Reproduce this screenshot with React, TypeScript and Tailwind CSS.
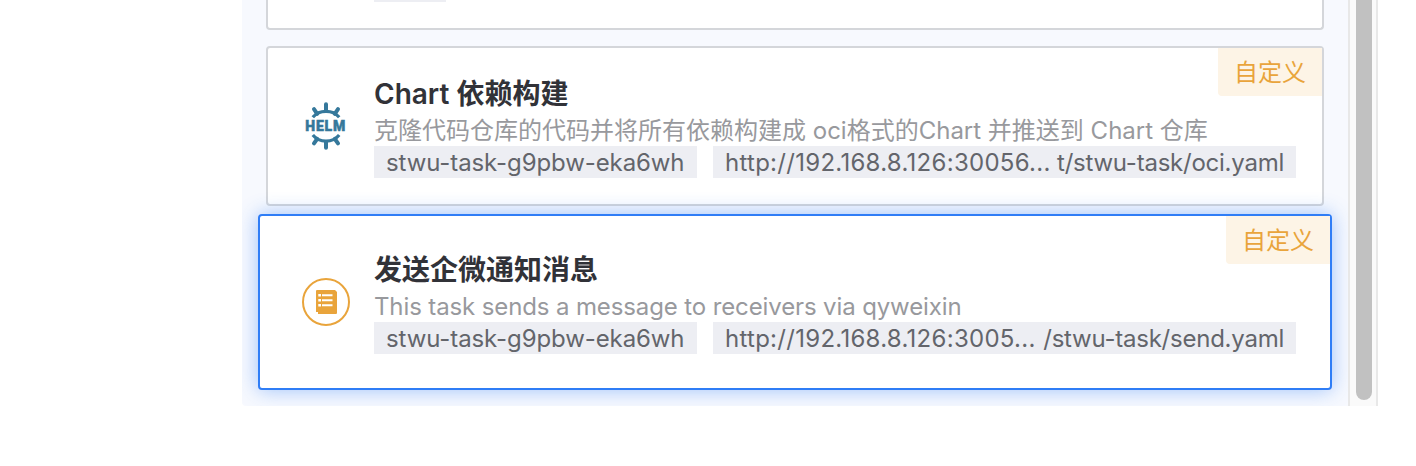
import type { ReactNode } from "react";

function HelmIcon() {
  return (
    <svg width="48" height="52" viewBox="0 0 48 52" className="block" fill="none" stroke="#35789b">
      <path d="M10.8 17.3C14 13.4 18.8 11.4 24 11.4S34 13.4 37.2 17.3" strokeWidth="3.2" />
      <path d="M10.8 35.1C14 39 18.8 41.2 24 41.2S34 39 37.2 35.1" strokeWidth="3.2" />
      <g strokeWidth="4" strokeLinecap="round">
        <path d="M24 4.2V10M24 42V47.8M12 9.2L15.2 13.8M36 9.2L32.8 13.8M12 43.4L15.2 38.8M36 43.4L32.8 38.8" />
      </g>
      <text
        x="3.2"
        y="31.2"
        textLength="41"
        lengthAdjust="spacingAndGlyphs"
        fill="#35789b"
        strokeWidth="0.5"
        className="font-['Roboto',sans-serif] text-[14.5px] font-black tracking-[0.9px]"
      >
        HELM
      </text>
    </svg>
  );
}

function NoticeIcon() {
  return (
    <svg width="48" height="48" viewBox="0 0 48 48" className="block">
      <circle cx="24" cy="24" r="23" fill="white" stroke="#e9a43b" strokeWidth="2" />
      <path d="M15 12H33L35 14V35Q35 36 34 36H16V34H14V13Q14 12 15 12Z" fill="#e9a43b" />
      <g stroke="white" strokeWidth="2">
        <path d="M20 17.3H30.5M20 22.3H30.5M20 27.3H30.5" />
        <path d="M16.3 17.3H19M16.3 22.3H19M16.3 27.3H19" strokeWidth="2.6" />
      </g>
    </svg>
  );
}

type CardProps = {
  icon: ReactNode;
  title: string;
  description: string;
  descriptionClass: string;
  urlHead: string;
  urlTail: string;
  selected?: boolean;
};

function TaskCard(p: CardProps) {
  return (
    <div
      className={
        p.selected
          ? "relative z-10 -mx-2 mt-2 flex h-[176px] items-center rounded border-2 border-[#2f7df6] bg-white pl-[42px] shadow-[0_0_20px_rgba(47,125,246,0.45)]"
          : "relative mt-4 flex h-[160px] items-center rounded border-2 border-[#d4d6da] bg-white pl-[34px]"
      }
    >
      <div className="flex w-[72px] shrink-0 justify-start">{p.icon}</div>
      <div className="flex flex-col">
        <h3 className="h-10 text-[28px] leading-[41px] font-semibold whitespace-nowrap text-[#313238]">{p.title}</h3>
        <p className={`h-8 text-[24px] leading-[34px] whitespace-nowrap text-[#98999d] ${p.descriptionClass}`}>{p.description}</p>
        <div className="flex gap-4 text-[24px] leading-[34px] text-[#63656b]">
          <div className="h-8 w-[323px] bg-[#edeef3] pl-3 tracking-[-0.1px] whitespace-nowrap">stwu-task-g9pbw-eka6wh</div>
          <div className="flex h-8 w-[583px] justify-between bg-[#edeef3] px-3 whitespace-nowrap">
            <span className="tracking-[0.28px]">{p.urlHead}</span>
            <span className="tracking-[-0.24px]">{p.urlTail}</span>
          </div>
        </div>
      </div>
      <span className="absolute top-0 right-0 h-12 w-[104px] rounded-bl bg-[#fdf4e6] text-center text-[24px] leading-[50px] text-[#e9a43b]">
        自定义
      </span>
    </div>
  );
}

export default function App() {
  return (
    <main className="h-[466px] w-[1416px] overflow-hidden bg-white pl-[242px] font-['Inter','Noto_Sans_CJK_SC',sans-serif]">
      <div className="flex h-[406px] w-[1136px] overflow-hidden rounded-bl bg-[#f7f9fe]">
        <div className="w-[1106px] px-6">
          <div className="h-[30px] rounded-b border-2 border-t-0 border-[#d4d6da] bg-white pl-[106px]">
            <div className="h-0.5 w-[72px] bg-[#edeef3]" />
          </div>
          <TaskCard
            icon={<HelmIcon />}
            title="Chart 依赖构建"
            description="克隆代码仓库的代码并将所有依赖构建成 oci格式的Chart 并推送到 Chart 仓库"
            descriptionClass=""
            urlHead="http://192.168.8.126:30056..."
            urlTail="t/stwu-task/oci.yaml"
          />
          <TaskCard
            selected
            icon={<NoticeIcon />}
            title="发送企微通知消息"
            description="This task sends a message to receivers via qyweixin"
            descriptionClass="tracking-[-0.12px]"
            urlHead="http://192.168.8.126:3005..."
            urlTail="/stwu-task/send.yaml"
          />
        </div>
        <div className="relative z-20 flex w-[30px] items-end border-x-2 border-[#e8e8e8] bg-[#fafafa] pb-1.5 pl-1.5">
          <div className="h-[400px] w-4 rounded-b-full bg-[#c1c1c1]" />
        </div>
      </div>
    </main>
  );
}
